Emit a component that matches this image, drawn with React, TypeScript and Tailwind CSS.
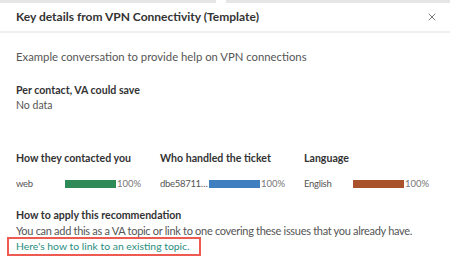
import { X } from "lucide-react";

const rows = [
  { head: "How they contacted you", label: "web", color: "bg-[#2e8b57]" },
  { head: "Who handled the ticket", label: "dbe58711…", color: "bg-[#3f7fbf]" },
  { head: "Language", label: "English", color: "bg-[#a9522c]" },
];

export default function App() {
  return (
    <div className="w-[450px] h-[271px] bg-white overflow-hidden text-[11px] text-[#555] font-['Lato',sans-serif]">
      {/* bit of the page behind the panel */}
      <div className="flex h-[3px] gap-[10px]">
        <div className="w-[216px] bg-[#e6e6e6]" />
        <div className="flex-1 bg-[#e6e6e6]" />
      </div>

      <div className="h-[30px] flex items-center justify-between pl-4 pr-[12px] border-b-2 border-[#f0f0f0]">
        <h1 className="text-[12px] font-bold text-[#333]">Key details from VPN Connectivity (Template)</h1>
        <X className="w-[12px] h-[12px] text-[#777]" strokeWidth={2} />
      </div>

      <div className="px-4 leading-[15px]">
        <p className="mt-[16px] text-[11.3px]">Example conversation to provide help on VPN connections</p>

        <p className="mt-[19px] font-bold text-[#333] text-[10.6px]">Per contact, VA could save</p>
        <p className="text-[10.5px]">No data</p>

        <div className="mt-[38px] grid grid-cols-[144px_144px_1fr]">
          {rows.map((r) => (
            <div key={r.head}>
              <p className="font-bold text-[#333] text-[10.6px]">{r.head}</p>
              <div className="mt-[10px] flex items-center text-[9.5px]">
                <span className="w-[49px] whitespace-nowrap tracking-[-0.3px]">{r.label}</span>
                <span className={`w-[51px] h-[8px] ${r.color}`} />
                <span className="ml-px text-[9.5px] text-[#777]">100%</span>
              </div>
            </div>
          ))}
        </div>

        <p className="mt-[17px] font-bold text-[#333] text-[10.6px]">How to apply this recommendation</p>
        <p className="whitespace-nowrap tracking-[-0.3px]">
          You can add this as a VA topic or link to one covering these issues that you already have.
        </p>
        <div className="-ml-[9px] -mt-px inline-block border-2 border-[#ee5a52] pl-[7px] pr-[9px] leading-[14px] pb-px">
          <a className="text-[#2a8d7e] text-[10.4px]">Here's how to link to an existing topic.</a>
        </div>
      </div>
    </div>
  );
}
